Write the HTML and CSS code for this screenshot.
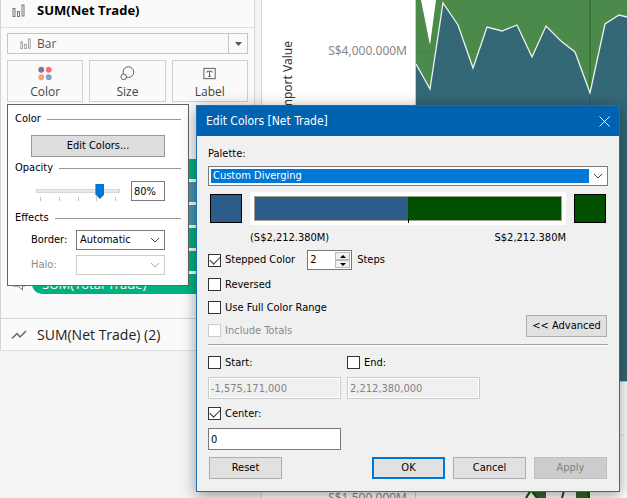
FILE: index.html
```html
<!DOCTYPE html>
<html lang="en">
<head>
<meta charset="utf-8">
<title>Edit Colors</title>
<link rel="stylesheet" href="styles.css">
</head>
<body>
<div class="workspace">
  <aside class="shelf">
    <section class="marks">
      <h2 class="card-title">
        <svg class="bars" width="13" height="13" viewBox="0 0 13 13"><rect x="1" y="4.500" width="2" height="8"/><rect x="5.500" y="7.500" width="2" height="5"/><rect x="10" y="1" width="2" height="11"/></svg>
        SUM(Net Trade)
      </h2>
      <div class="mark-body">
        <div class="mark-type">
          <svg class="bars small" width="11" height="11" viewBox="0 0 13 13"><rect x="1" y="4.500" width="2" height="8"/><rect x="5.500" y="7.500" width="2" height="5"/><rect x="10" y="1" width="2" height="11"/></svg>
          <select aria-label="Mark type"><option>Bar</option></select>
          <svg class="arrow" width="7" height="4" viewBox="0 0 7 4"><path d="M0 0H7L3.500 4Z"/></svg>
        </div>
        <div class="tiles">
          <button class="tile"><svg width="16" height="16" viewBox="0 0 16 16"><circle cx="4" cy="4" r="3.100" fill="#86709c"/><circle cx="12" cy="4" r="3.100" fill="#f8707f"/><circle cx="4" cy="12" r="3.100" fill="#f1a578"/><circle cx="12" cy="12" r="3.100" fill="#7da2cc"/></svg>Color</button>
          <button class="tile"><svg width="16" height="16" viewBox="0 0 16 16" fill="none" stroke="#555"><circle cx="9.500" cy="6.500" r="5.700"/><circle cx="4.500" cy="11.500" r="3" fill="#fafafa"/></svg>Size</button>
          <button class="tile"><svg width="16" height="16" viewBox="0 0 16 16" fill="none" stroke="#555"><rect x="1.500" y="2.500" width="12" height="11"/><path d="M5 7V5.500H10V7M7.500 5.500V11M6 11H9"/></svg>Label</button>
        </div>
        <ul class="pills">
          <li class="pill"></li><li class="pill measure"></li><li class="pill measure"></li><li class="pill"></li><li class="pill"></li>
          <li class="pill"><svg width="14" height="14" viewBox="0 0 14 14"><path d="M1 2H13V9H10.500V13L6 9H1Z"/></svg><span>SUM(Total Trade)</span></li>
        </ul>
      </div>
    </section>
    <h2 class="card-title second">
      <svg class="line-icon" width="16" height="12" viewBox="0 0 16 12"><path d="M1 9.500L6 4.500L9 8L15 2"/></svg>
      SUM(Net Trade) (2)
    </h2>
  </aside>

  <main class="view">
    <div class="axis">
      <span class="axis-title">Import Value</span>
      <span class="tick">S$4,000.000M</span>
    </div>
    <svg class="plot" viewBox="0 0 211 381" preserveAspectRatio="none">
      <rect width="211" height="381" fill="#4c8a4c"/>
      <path d="M5 0L14 45L20 0Z" fill="#fff"/>
      <path class="area" d="M0 64L14 89L27 3L42 25L57 68L71 27L86 31L101 25L116 57L130 26L145 41L159 52L174 93L189 24L203 15L211 17V381H0Z"/>
      <path d="M0 51.500H211" stroke="#000" stroke-opacity=".05"/>
      <path d="M174 0V93" stroke="#3a7439" stroke-width="2"/>
      <path d="M174 93V381" stroke="#2b5f70" stroke-width="2"/>
      <path class="edge" d="M0 64L14 89L27 3L42 25L57 68L71 27L86 31L101 25L116 57L130 26L145 41L159 52L174 93L189 24L203 15L211 17"/>
    </svg>
    <div class="axis lower"><span class="tick">S$1,500.000M</span></div>
    <svg class="plot lower" viewBox="0 0 211 117" preserveAspectRatio="none">
      <path d="M0 53.500H211" stroke="#ddd" stroke-dasharray="3 2"/>
      <path d="M115 109H130V117H121ZM160 109H174V117H160Z" fill="#2c6a2c"/>
      <path d="M110 117L115 109L121 117M146 117L149 106M171 106L173 117" fill="none" stroke="#0b4f0b" stroke-width="2"/>
    </svg>
  </main>
</div>

<section class="popup" aria-label="Color options">
  <h3 class="group">Color</h3>
  <button class="btn edit">Edit Colors...</button>
  <h3 class="group opacity">Opacity</h3>
  <div class="slider-row">
    <div class="slider">
      <input type="range" min="0" max="100" value="80" aria-label="Opacity">
      <div class="ticks"><i></i><i></i><i></i><i></i><i></i></div>
    </div>
    <input class="percent" value="80%" aria-label="Opacity value">
  </div>
  <h3 class="group effects">Effects</h3>
  <div class="effect">
    <label for="border">Border:</label>
    <div class="combo"><select id="border"><option>Automatic</option></select><svg width="10" height="6" viewBox="0 0 10 6"><path d="M1 1L5 5L9 1"/></svg></div>
  </div>
  <div class="effect off">
    <label for="halo">Halo:</label>
    <div class="combo"><select id="halo" disabled><option></option></select><svg width="10" height="6" viewBox="0 0 10 6"><path d="M1 1L5 5L9 1"/></svg></div>
  </div>
</section>

<section class="dialog" role="dialog" aria-labelledby="dialog-title">
  <header class="dialog-bar">
    <h1 id="dialog-title">Edit Colors [Net Trade]</h1>
    <button class="close" aria-label="Close"><svg width="11" height="11" viewBox="0 0 11 11"><path d="M.5 .5L10.500 10.500M10.500 .5L.5 10.500"/></svg></button>
  </header>
  <div class="dialog-body">
    <label class="palette-label" for="palette">Palette:</label>
    <div class="combo palette"><select id="palette"><option>Custom Diverging</option></select><svg width="10" height="6" viewBox="0 0 10 6"><path d="M1 1L5 5L9 1"/></svg></div>
    <div class="ramp-row">
      <button class="swatch low" aria-label="Low color"></button>
      <div class="ramp"><div class="ramp-fill"></div></div>
      <button class="swatch high" aria-label="High color"></button>
    </div>
    <div class="range"><span>(S$2,212.380M)</span><span>S$2,212.380M</span></div>
    <div class="stepped">
      <label class="check"><input type="checkbox" checked>Stepped Color</label>
      <div class="spinner">
        <input id="steps" value="2">
        <button aria-label="More steps"><svg width="6" height="3" viewBox="0 0 6 3"><path d="M0 3H6L3 0Z"/></svg></button>
        <button aria-label="Fewer steps"><svg width="6" height="3" viewBox="0 0 6 3"><path d="M0 0H6L3 3Z"/></svg></button>
      </div>
      <label for="steps">Steps</label>
    </div>
    <div class="options">
      <div class="checks">
        <label class="check"><input type="checkbox">Reversed</label>
        <label class="check"><input type="checkbox">Use Full Color Range</label>
        <label class="check off"><input type="checkbox" disabled>Include Totals</label>
      </div>
      <button class="btn advanced">&lt;&lt; Advanced</button>
    </div>
    <hr>
    <div class="fields">
      <div><label class="check"><input type="checkbox">Start:</label><input class="field" value="-1,575,171,000" aria-label="Start" disabled></div>
      <div><label class="check"><input type="checkbox">End:</label><input class="field" value="2,212,380,000" aria-label="End" disabled></div>
      <div><label class="check"><input type="checkbox" checked>Center:</label><input class="field" value="0" aria-label="Center"></div>
    </div>
    <footer class="actions">
      <button class="btn reset">Reset</button>
      <button class="btn default">OK</button>
      <button class="btn">Cancel</button>
      <button class="btn" disabled>Apply</button>
    </footer>
  </div>
</section>
</body>
</html>
```
FILE: styles.css
```css
* { box-sizing: border-box; }
body {
  margin: 0;
  min-height: 100vh;
  overflow: hidden;
  background: #f4f4f4;
  color: #000;
  font: 11px/14px "DejaVu Sans Condensed", "Noto Sans", sans-serif;
}
button, input, select { font: inherit; color: inherit; margin: 0; padding: 0; border-radius: 0; }
select { appearance: none; outline: none; }
h1, h2, h3, ul { margin: 0; padding: 0; font: inherit; list-style: none; }

/* Workspace */
.workspace { display: grid; grid-template-columns: 262px 1fr; height: 100vh; }
.shelf { border-right: 1px solid #d6d6d6; padding-right: 6px; }
.marks, .second { background: #fafafa; border: 1px solid #d4d4d4; border-top: 0; }
.card-title {
  display: flex; align-items: center; gap: 12px;
  height: 28px; padding: 0 0 7px 11px;
  border-bottom: 1px solid #dcdcdc;
  font: bold 13px/20px "Open Sans", sans-serif;
}
.marks { height: 319px; }
.second { height: 32px; padding: 0 0 0 10px; gap: 10px; font-size: 14px; font-weight: normal; color: #222; }
.bars { fill: none; stroke: #777; }
.small { stroke: #999; }
.line-icon { fill: none; stroke: #666; stroke-width: 1.5; }
.mark-body { padding: 5px 6px; }
.mark-type {
  display: grid; grid-template-columns: 29px 1fr 18px; align-items: center; justify-items: center;
  height: 21px; border: 1px solid #c6c6c6; color: #555;
  font: 12px/18px "Open Sans", sans-serif;
}
.mark-type .small { justify-self: end; margin-right: 6px; }
.mark-type select { width: 100%; height: 19px; border: 0; border-right: 1px solid #c6c6c6; background: none; }
.arrow { fill: #555; }
.tiles { display: grid; grid-template-columns: repeat(3, 1fr); gap: 6px; margin-top: 6px; }
.tile {
  display: flex; flex-direction: column; align-items: center; gap: 2px;
  height: 42px; padding-top: 5px; border: 1px solid #d0d0d0; background: #fafafa; color: #444;
  font: 12px/18px "Open Sans", sans-serif;
}
.pills { display: grid; gap: 3px; margin: 57px 0 0 25px; }
.pill { height: 20px; border-radius: 10px; background: #00b180; color: #fff; font: 13px/20px "Open Sans", sans-serif; }
.measure { background: #4996b2; }
.pill svg { float: left; margin: 3px 0 0 -20px; fill: none; stroke: #777; }
.pill span { padding-left: 10px; }

/* Chart */
.view { display: grid; grid-template-columns: 154px 1fr; grid-template-rows: 381px 1fr; background: #fff; overflow: hidden; }
.axis { display: flex; justify-content: space-between; padding: 41px 8px 0 17px; border-right: 1px solid #ccc; }
.axis.lower { justify-content: flex-end; align-items: flex-end; padding: 0 8px 0 0; border-top: 1px solid #bbb; }
.axis-title { writing-mode: vertical-rl; transform: rotate(180deg); color: #333; font: 12px/18px "Noto Sans", sans-serif; align-self: flex-start; }
.tick { color: #888; font: 12px/20px "Noto Sans", sans-serif; }
.axis.lower .tick { margin-bottom: -10px; }
.plot { width: 100%; height: 100%; }
.plot.lower { border-top: 1px solid #bbb; }
.area { fill: #346876; }
.edge { fill: none; stroke: #fff; stroke-opacity: .9; stroke-width: 1.3; }

/* Shared controls */
.btn { height: 22px; border: 1px solid #adadad; background: #e1e1e1; }
.btn:disabled { background: #ccc; border-color: #bfbfbf; color: #838383; }
.combo { display: grid; grid-template-columns: 1fr 18px; align-items: center; justify-items: center; height: 20px; border: 1px solid #7a7a7a; background: #fff; }
.combo select { grid-area: 1 / 1 / 2 / 3; width: 100%; height: 18px; padding-left: 3px; border: 0; background: none; opacity: 1; }
.combo svg { grid-area: 1 / 2; fill: none; stroke: #444; pointer-events: none; }
.check { display: flex; align-items: center; gap: 4px; height: 13px; }
.check input { appearance: none; display: grid; place-items: center; width: 13px; height: 13px; border: 1px solid #333; background: #fff; }
.check input:checked::before { content: ""; width: 9px; height: 5px; margin-bottom: 3px; border: solid #333; border-width: 0 0 1px 1px; transform: rotate(-45deg); }
.off { color: #8a8a8a; }
.check.off input, .off .combo { border-color: #ccc; }
.off svg { stroke: #aaa; }

/* Color popup */
.popup { position: absolute; left: 7px; top: 104px; width: 182px; padding: 7px 7px 10px; border: 1px solid #646464; background: #fff; }
.group { display: flex; align-items: center; gap: 6px; height: 14px; }
.group::after { content: ""; flex: 1; height: 1px; background: #999; }
.edit { display: block; width: 134px; margin: 9px 0 4px 16px; border-color: #999; background: #ddd; }
.slider-row { display: flex; justify-content: space-between; margin: 6px 16px 10px 21px; height: 20px; }
.slider { width: 84px; padding-top: 4px; }
.slider input { display: block; appearance: none; width: 100%; height: 12px; background: none; }
.slider input::-webkit-slider-runnable-track { height: 4px; border: 1px solid #d6d6d6; background: #e7eaea; }
.slider input::-webkit-slider-thumb { appearance: none; width: 9px; height: 15px; margin-top: -6px; background: #0078d7; clip-path: polygon(0 0, 100% 0, 100% 70%, 50% 100%, 0 70%); }
.ticks { display: flex; justify-content: space-between; padding: 0 4px; }
.ticks i { width: 1px; height: 4px; background: #c4c4c4; }
.percent { width: 34px; height: 20px; padding-left: 2px; border: 1px solid #7a7a7a; background: #fff; }
.effect { display: grid; grid-template-columns: 45px 89px; align-items: center; margin: 5px 0 0 16px; }

/* Edit Colors dialog */
.dialog { position: absolute; left: 196px; top: 105px; width: 424px; border: 1px solid #1a6fb5; background: #f0f0f0; box-shadow: 0 3px 14px rgba(0, 0, 0, .4); }
.dialog-bar { display: flex; align-items: center; justify-content: space-between; height: 30px; padding: 0 9px; background: #0063b1; color: #fff; font-size: 12px; }
.close { display: grid; border: 0; background: none; }
.close svg { fill: none; stroke: #fff; }
.dialog-body { display: flex; flex-direction: column; padding: 11px 11px 12px; }
.palette-label { padding-bottom: 5px; }
.palette select { height: 14px; margin: 0 18px 0 2px; width: calc(100% - 20px); padding-left: 2px; justify-self: start; background: #0078d7; color: #fff; }
.ramp-row { display: grid; grid-template-columns: 32px 1fr 32px; gap: 8px; align-items: center; padding: 6px 2px 5px; }
.swatch { height: 29px; border: 1px solid #000; }
.low { background: #2b5c8a; }
.high { background: #005000; }
.ramp { height: 33px; padding: 4px; background: #fff; }
.ramp-fill { height: 25px; border: 1px solid #a0a090; background: linear-gradient(90deg, #2b5c8a 50%, #005000 50%); }
.ramp-fill::after { content: ""; display: block; width: 1px; height: 4px; margin: 0 auto; background: #000; transform: translateY(22px); }
.range { display: flex; justify-content: space-between; padding: 1px 42px 5px; }
.stepped { display: flex; align-items: center; height: 20px; }
.stepped .check { min-width: 85px; }
.spinner { display: grid; grid-template: 1fr 1fr / 1fr 15px; width: 45px; height: 20px; margin: 0 5px 0 12px; padding: 1px; border: 1px solid #7a7a7a; background: #fff; }
.spinner input { grid-row: 1 / 3; width: 100%; padding-left: 1px; border: 0; background: none; }
.spinner button { grid-column: 2; display: grid; place-items: center; border: 1px solid #bbb; background: #f0f0f0; }
.options { display: flex; justify-content: space-between; align-items: flex-end; padding-top: 8px; }
.checks { display: grid; gap: 10px; }
.advanced { width: 81px; margin-right: 1px; }
hr { width: 100%; height: 2px; margin: 7px 0 10px; border: 0; border-top: 1px solid #a0a0a0; background: #fff; }
.fields { display: grid; grid-template-columns: 133px 133px; gap: 8px 6px; }
.field { display: block; width: 100%; height: 22px; margin-top: 8px; padding-left: 2px; border: 1px solid #7a7a7a; background: #fff; }
.field:disabled { border-color: #ccc; background: #f0f0f0; color: #838383; box-shadow: inset 0 0 0 1px #fff; }
.actions { display: flex; gap: 8px; padding: 7px 1px 0; }
.actions .btn { width: 73px; }
.reset { margin-right: auto; }
.default { border: 2px solid #0078d7; }
```
